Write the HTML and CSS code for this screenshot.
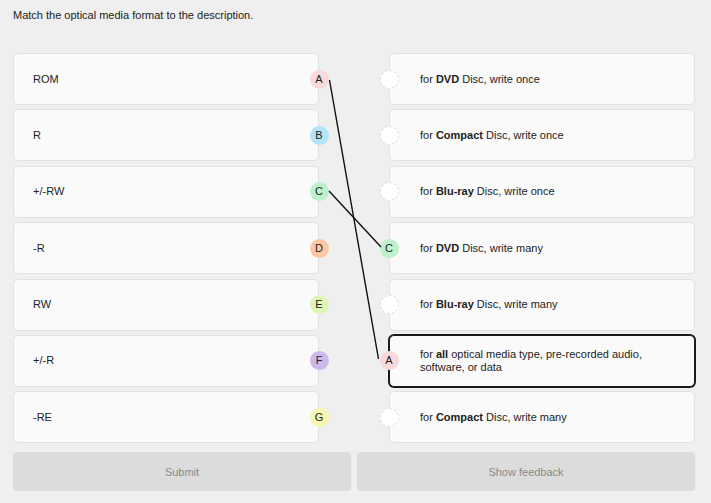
FILE: index.html
```html
<!DOCTYPE html>
<html>
<head>
<meta charset="utf-8">
<link rel="stylesheet" href="styles.css">
</head>
<body>
<div class="page">
  <p class="title">Match the optical media format to the description.</p>
  <div class="board">
    <div class="col">
      <div class="card left"><span>ROM</span><i class="dot a">A</i></div>
      <div class="card left"><span>R</span><i class="dot b">B</i></div>
      <div class="card left"><span>+/-RW</span><i class="dot c">C</i></div>
      <div class="card left"><span>-R</span><i class="dot d">D</i></div>
      <div class="card left"><span>RW</span><i class="dot e">E</i></div>
      <div class="card left"><span>+/-R</span><i class="dot f">F</i></div>
      <div class="card left"><span>-RE</span><i class="dot g">G</i></div>
    </div>
    <div class="col">
      <div class="card right"><i class="slot"></i><span>for <b>DVD</b> Disc, write once</span></div>
      <div class="card right"><i class="slot"></i><span>for <b>Compact</b> Disc, write once</span></div>
      <div class="card right"><i class="slot"></i><span>for <b>Blu-ray</b> Disc, write once</span></div>
      <div class="card right"><i class="dot c">C</i><span>for <b>DVD</b> Disc, write many</span></div>
      <div class="card right"><i class="slot"></i><span>for <b>Blu-ray</b> Disc, write many</span></div>
      <div class="card right selected"><i class="dot a">A</i><span>for <b>all</b> optical media type, pre-recorded audio, software, or data</span></div>
      <div class="card right"><i class="slot"></i><span>for <b>Compact</b> Disc, write many</span></div>
    </div>
  </div>
  <div class="actions">
    <button class="btn">Submit</button>
    <button class="btn">Show feedback</button>
  </div>
  <svg class="links" width="711" height="503" viewBox="0 0 711 503">
    <line x1="329.5" y1="80" x2="378.5" y2="359" stroke="#111" stroke-width="1.4"/>
    <line x1="329" y1="191" x2="381" y2="247" stroke="#111" stroke-width="1.4"/>
  </svg>
</div>
</body>
</html>
```

FILE: styles.css
```css
html, body {
  margin: 0;
  padding: 0;
  background: #efefef;
}
.page {
  position: relative;
  width: 711px;
  height: 503px;
  box-sizing: border-box;
  padding: 9px 16px 0 13px;
  font-family: "Liberation Sans", Arial, sans-serif;
  font-size: 11px;
  color: #222;
}
.title {
  margin: 0;
  line-height: 13px;
  height: 13px;
}
.board {
  margin-top: 31px;
  display: grid;
  grid-template-columns: 306px 306px;
  column-gap: 70px;
}
.col {
  display: flex;
  flex-direction: column;
  gap: 4.4px;
}
.card {
  position: relative;
  height: 52px;
  box-sizing: border-box;
  background: #fafafa;
  border: 1px solid #e1e2e6;
  border-radius: 5px;
  display: flex;
  align-items: center;
  line-height: 13px;
}
.card.left {
  padding-left: 19px;
}
.card.right {
  padding-left: 30px;
  padding-right: 20px;
}
.card.selected {
  border-color: #1a1a1a;
  box-shadow: 0 0 0 1px #1a1a1a;
}
.card b {
  font-weight: bold;
}
.dot, .slot {
  position: absolute;
  top: 50%;
  width: 19px;
  height: 19px;
  margin-top: -9.5px;
  border-radius: 50%;
  font-style: normal;
  font-size: 11px;
  line-height: 19px;
  text-align: center;
  color: #222;
}
.left .dot {
  right: -10.5px;
}
.right .dot, .right .slot {
  left: -10.5px;
}
.slot {
  box-sizing: border-box;
  background: #fff;
  border: 1px dashed #dcdcdc;
}
.a { background: #f9d9d9; }
.b { background: #b2e6f6; }
.c { background: #bdf0cb; }
.d { background: #fcc8a4; }
.e { background: #dff5b5; }
.f { background: #cbb9eb; }
.g { background: #f8f6b0; }
.actions {
  margin-top: 9px;
  display: grid;
  grid-template-columns: 1fr 1fr;
  gap: 6px;
}
.btn {
  height: 39px;
  border: none;
  border-radius: 4px;
  background: #dcdcdc;
  color: #8a8a8a;
  font-family: "Liberation Sans", Arial, sans-serif;
  font-size: 11px;
  padding: 0;
}
.links {
  position: absolute;
  left: 0;
  top: 0;
  pointer-events: none;
}
```
